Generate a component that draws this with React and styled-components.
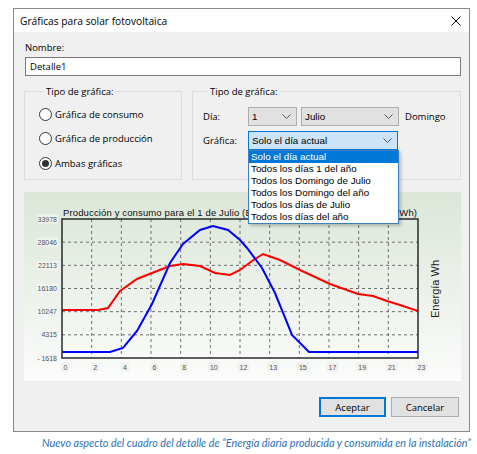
import React from "react";
import styled, { createGlobalStyle } from "styled-components";

const GlobalStyle = createGlobalStyle`
  html, body {
    margin: 0;
    padding: 0;
    background: #ffffff;
  }
  body {
    font-family: "Open Sans", "Noto Sans", sans-serif;
    color: #000;
  }
`;

const Page = styled.div`
  width: 477px;
  height: 454px;
  box-sizing: border-box;
  padding: 8px 0 0 13px;
  overflow: hidden;
`;

const Window = styled.div`
  width: 457px;
  height: 424px;
  box-sizing: border-box;
  border: 1px solid #8a8a8a;
  background: #f0f0f0;
  display: flex;
  flex-direction: column;
`;

const TitleBar = styled.div`
  flex: none;
  height: 23px;
  background: #ffffff;
  display: flex;
  align-items: center;
  justify-content: space-between;
  padding: 0 8px 0 6px;
  font-size: 10.2px;
`;

const Body = styled.div`
  flex: 1;
  display: flex;
  flex-direction: column;
  padding: 9px 8px 0 10px;
  font-size: 9.5px;
`;

const FieldLabel = styled.div`
  line-height: 13px;
  padding-left: 1px;
`;

const TextInput = styled.div`
  margin-top: 3px;
  height: 19px;
  box-sizing: border-box;
  border: 1px solid #7a7a7a;
  background: #fff;
  display: flex;
  align-items: center;
  padding-left: 4px;
  margin-left: 1px;
`;

const GroupsRow = styled.div`
  margin-top: 9px;
  display: grid;
  grid-template-columns: 158px 1fr;
  gap: 10px;
`;

const Group = styled.fieldset`
  margin: 0;
  min-width: 0;
  height: 95px;
  box-sizing: border-box;
  border: 1px solid #dcdcdc;
  padding: ${(p) => p.$pad};
`;

const Legend = styled.legend`
  padding: 0 2px;
  margin-left: 5px;
  line-height: 13px;
`;

const RadioList = styled.div`
  display: flex;
  flex-direction: column;
`;

const RadioRow = styled.div`
  height: 24.5px;
  display: flex;
  align-items: center;
  gap: 3px;
`;

const RadioDot = styled.span`
  flex: none;
  width: 11px;
  height: 11px;
  border-radius: 50%;
  border: 1px solid #333;
  background: #fff;
  display: flex;
  align-items: center;
  justify-content: center;
  &::after {
    content: "";
    width: 7px;
    height: 7px;
    border-radius: 50%;
    background: ${(p) => (p.$checked ? "#333" : "transparent")};
  }
`;

const FormGrid = styled.div`
  display: grid;
  grid-template-columns: 45px auto;
  row-gap: 5px;
  align-items: center;
`;

const InlineRow = styled.div`
  display: flex;
  align-items: center;
  gap: 4px;
`;

const DayName = styled.span`
  margin-left: 2px;
`;

const ComboWrap = styled.div`
  position: relative;
  width: ${(p) => p.$w}px;
`;

const Combo = styled.div`
  height: 19px;
  box-sizing: border-box;
  border: 1px solid ${(p) => (p.$active ? "#0078d7" : "#adadad")};
  background: ${(p) => (p.$active ? "#cce4f7" : "#e1e1e1")};
  display: flex;
  align-items: center;
  justify-content: space-between;
  padding: 0 5px 0 3px;
  font-family: "Liberation Sans", Arial, sans-serif;
  font-size: 9.8px;
`;

const Chevron = () => (
  <svg width="9" height="5" viewBox="0 0 9 5">
    <path d="M0.5 0.5 L4.5 4.5 L8.5 0.5" fill="none" stroke="#555" strokeWidth="1" />
  </svg>
);

const DropList = styled.div`
  position: absolute;
  top: 100%;
  left: 0;
  width: 151px;
  box-sizing: border-box;
  border: 1px solid #3c7fc0;
  background: #fff;
  box-shadow: 2px 2px 3px rgba(0, 0, 0, 0.22);
  z-index: 5;
  font-family: "Liberation Sans", Arial, sans-serif;
  font-size: 9.8px;
`;

const DropItem = styled.div`
  height: 12px;
  line-height: 12px;
  padding-left: 2px;
  white-space: nowrap;
  background: ${(p) => (p.$selected ? "#0078d7" : "transparent")};
  color: ${(p) => (p.$selected ? "#fff" : "#000")};
`;

const ChartPanel = styled.div`
  margin-top: 12px;
  height: 189px;
  background: linear-gradient(#dbe6d8, #fbfcfb);
`;

const ButtonRow = styled.div`
  margin-top: 16px;
  display: flex;
  justify-content: flex-end;
  gap: 5px;
  padding-right: 2px;
`;

const Button = styled.div`
  width: ${(p) => p.$w}px;
  height: 20px;
  box-sizing: border-box;
  background: #e1e1e1;
  border: 1px solid ${(p) => (p.$primary ? "#0078d7" : "#adadad")};
  box-shadow: ${(p) => (p.$primary ? "inset 0 0 0 1px #0078d7" : "none")};
  display: flex;
  align-items: center;
  justify-content: center;
`;

const Caption = styled.div`
  margin-top: 4px;
  padding-left: 29px;
  line-height: 14px;
  white-space: nowrap;
  font-family: Lato, "Open Sans", sans-serif;
  font-style: italic;
  font-size: 10.8px;
  color: #2e6fb3;
`;

const W = 356;
const H = 139;
const X0 = 38;
const Y0 = 27;
const yTicks = ["33978", "28046", "22113", "16180", "10247", "4315", "- 1618"];
const xTicks = ["0", "2", "4", "6", "8", "10", "12", "13", "15", "17", "19", "21", "23"];

const production = [
  [38, 160], [86, 160], [99, 156], [113, 139], [128, 112], [146, 71], [159, 52],
  [176, 38], [189, 34], [204, 38], [216, 48], [223, 56], [238, 76], [251, 101],
  [268, 143], [285, 160], [394, 160],
];
const consumption = [
  [38, 118], [74, 118], [84, 116], [96, 99], [113, 87], [128, 81], [146, 74],
  [159, 72], [176, 74], [191, 81], [206, 83], [216, 78], [228, 69], [239, 62],
  [256, 68], [276, 78], [306, 92], [334, 102], [349, 104], [363, 109], [376, 113],
  [394, 119],
];

const toPoints = (pts) => pts.map((p) => p.join(",")).join(" ");

function Chart() {
  const dx = W / 12;
  const dy = H / 6;
  return (
    <svg width="436" height="189" viewBox="0 0 436 189">
      <text x="39" y="23.5" fontFamily="Liberation Sans, Arial, sans-serif" fontSize="9.5" fill="#111"
        textLength="354" lengthAdjust="spacing">
        Producción y consumo para el 1 de Julio (Energía producida y consumida en Wh)
      </text>
      {Array.from({ length: 11 }, (_, i) => (
        <line key={`v${i}`} x1={X0 + (i + 1) * dx} y1={Y0} x2={X0 + (i + 1) * dx} y2={Y0 + H}
          stroke="#6f6f6f" strokeDasharray="3 3" />
      ))}
      {Array.from({ length: 5 }, (_, j) => (
        <line key={`h${j}`} x1={X0} y1={Y0 + (j + 1) * dy} x2={X0 + W} y2={Y0 + (j + 1) * dy}
          stroke="#6f6f6f" strokeDasharray="3 3" />
      ))}
      <polyline points={toPoints(consumption)} fill="none" stroke="#ff0000" strokeWidth="2" />
      <polyline points={toPoints(production)} fill="none" stroke="#0000ff" strokeWidth="2" />
      <rect x={X0} y={Y0} width={W} height={H} fill="none" stroke="#2a2a2a" strokeWidth="1.5" />
      {yTicks.map((t, j) => (
        <g key={t}>
          <rect x="13" y={Y0 + j * dy - 4.5} width="21" height="9" fill="#f3f5f2" opacity="0.8" />
          <text x="33" y={Y0 + j * dy + 2.5} textAnchor="end" fontFamily="Liberation Sans, Arial, sans-serif"
            fontSize="7" fill="#555">{t}</text>
        </g>
      ))}
      {xTicks.map((t, i) => (
        <g key={`x${t}`}>
          <rect x={X0 + i * dx + 3.5 - (t.length * 2 + 2)} y="170.5" width={t.length * 4 + 4} height="9"
            fill="#eef0ed" opacity="0.9" />
          <text x={X0 + i * dx + 3.5} y="177.5" textAnchor="middle" fontFamily="Liberation Sans, Arial, sans-serif"
            fontSize="7" fill="#555">{t}</text>
        </g>
      ))}
      <text transform="translate(415 97) rotate(-90)" textAnchor="middle"
        fontFamily="Liberation Sans, Arial, sans-serif" fontSize="11" fill="#222">Energía Wh</text>
    </svg>
  );
}

export default function App() {
  return (
    <>
      <GlobalStyle />
      <Page>
        <Window>
          <TitleBar>
            <span>Gráficas para solar fotovoltaica</span>
            <svg width="10" height="10" viewBox="0 0 10 10">
              <path d="M0.5 0.5 L9.5 9.5 M9.5 0.5 L0.5 9.5" stroke="#000" strokeWidth="1" />
            </svg>
          </TitleBar>
          <Body>
            <FieldLabel>Nombre:</FieldLabel>
            <TextInput>Detalle1</TextInput>
            <GroupsRow>
              <Group $pad="4px 0 0 14px">
                <Legend>Tipo de gráfica:</Legend>
                <RadioList>
                  <RadioRow><RadioDot />Gráfica de consumo</RadioRow>
                  <RadioRow><RadioDot />Gráfica de producción</RadioRow>
                  <RadioRow><RadioDot $checked />Ambas gráficas</RadioRow>
                </RadioList>
              </Group>
              <Group $pad="9px 0 0 10px">
                <Legend>Tipo de gráfica:</Legend>
                <FormGrid>
                  <span>Día:</span>
                  <InlineRow>
                    <ComboWrap $w={49}>
                      <Combo>1<Chevron /></Combo>
                    </ComboWrap>
                    <ComboWrap $w={98}>
                      <Combo>Julio<Chevron /></Combo>
                    </ComboWrap>
                    <DayName>Domingo</DayName>
                  </InlineRow>
                  <span>Gráfica:</span>
                  <ComboWrap $w={150}>
                    <Combo $active>Solo el día actual<Chevron /></Combo>
                    <DropList>
                      <DropItem $selected>Solo el día actual</DropItem>
                      <DropItem>Todos los días 1 del año</DropItem>
                      <DropItem>Todos los Domingo de Julio</DropItem>
                      <DropItem>Todos los Domingo del año</DropItem>
                      <DropItem>Todos los días de Julio</DropItem>
                      <DropItem>Todos los días del año</DropItem>
                    </DropList>
                  </ComboWrap>
                </FormGrid>
              </Group>
            </GroupsRow>
            <ChartPanel>
              <Chart />
            </ChartPanel>
            <ButtonRow>
              <Button $w={67} $primary>Aceptar</Button>
              <Button $w={68}>Cancelar</Button>
            </ButtonRow>
          </Body>
        </Window>
        <Caption>Nuevo aspecto del cuadro del detalle de “Energía diaria producida y consumida en la instalación”</Caption>
      </Page>
    </>
  );
}
